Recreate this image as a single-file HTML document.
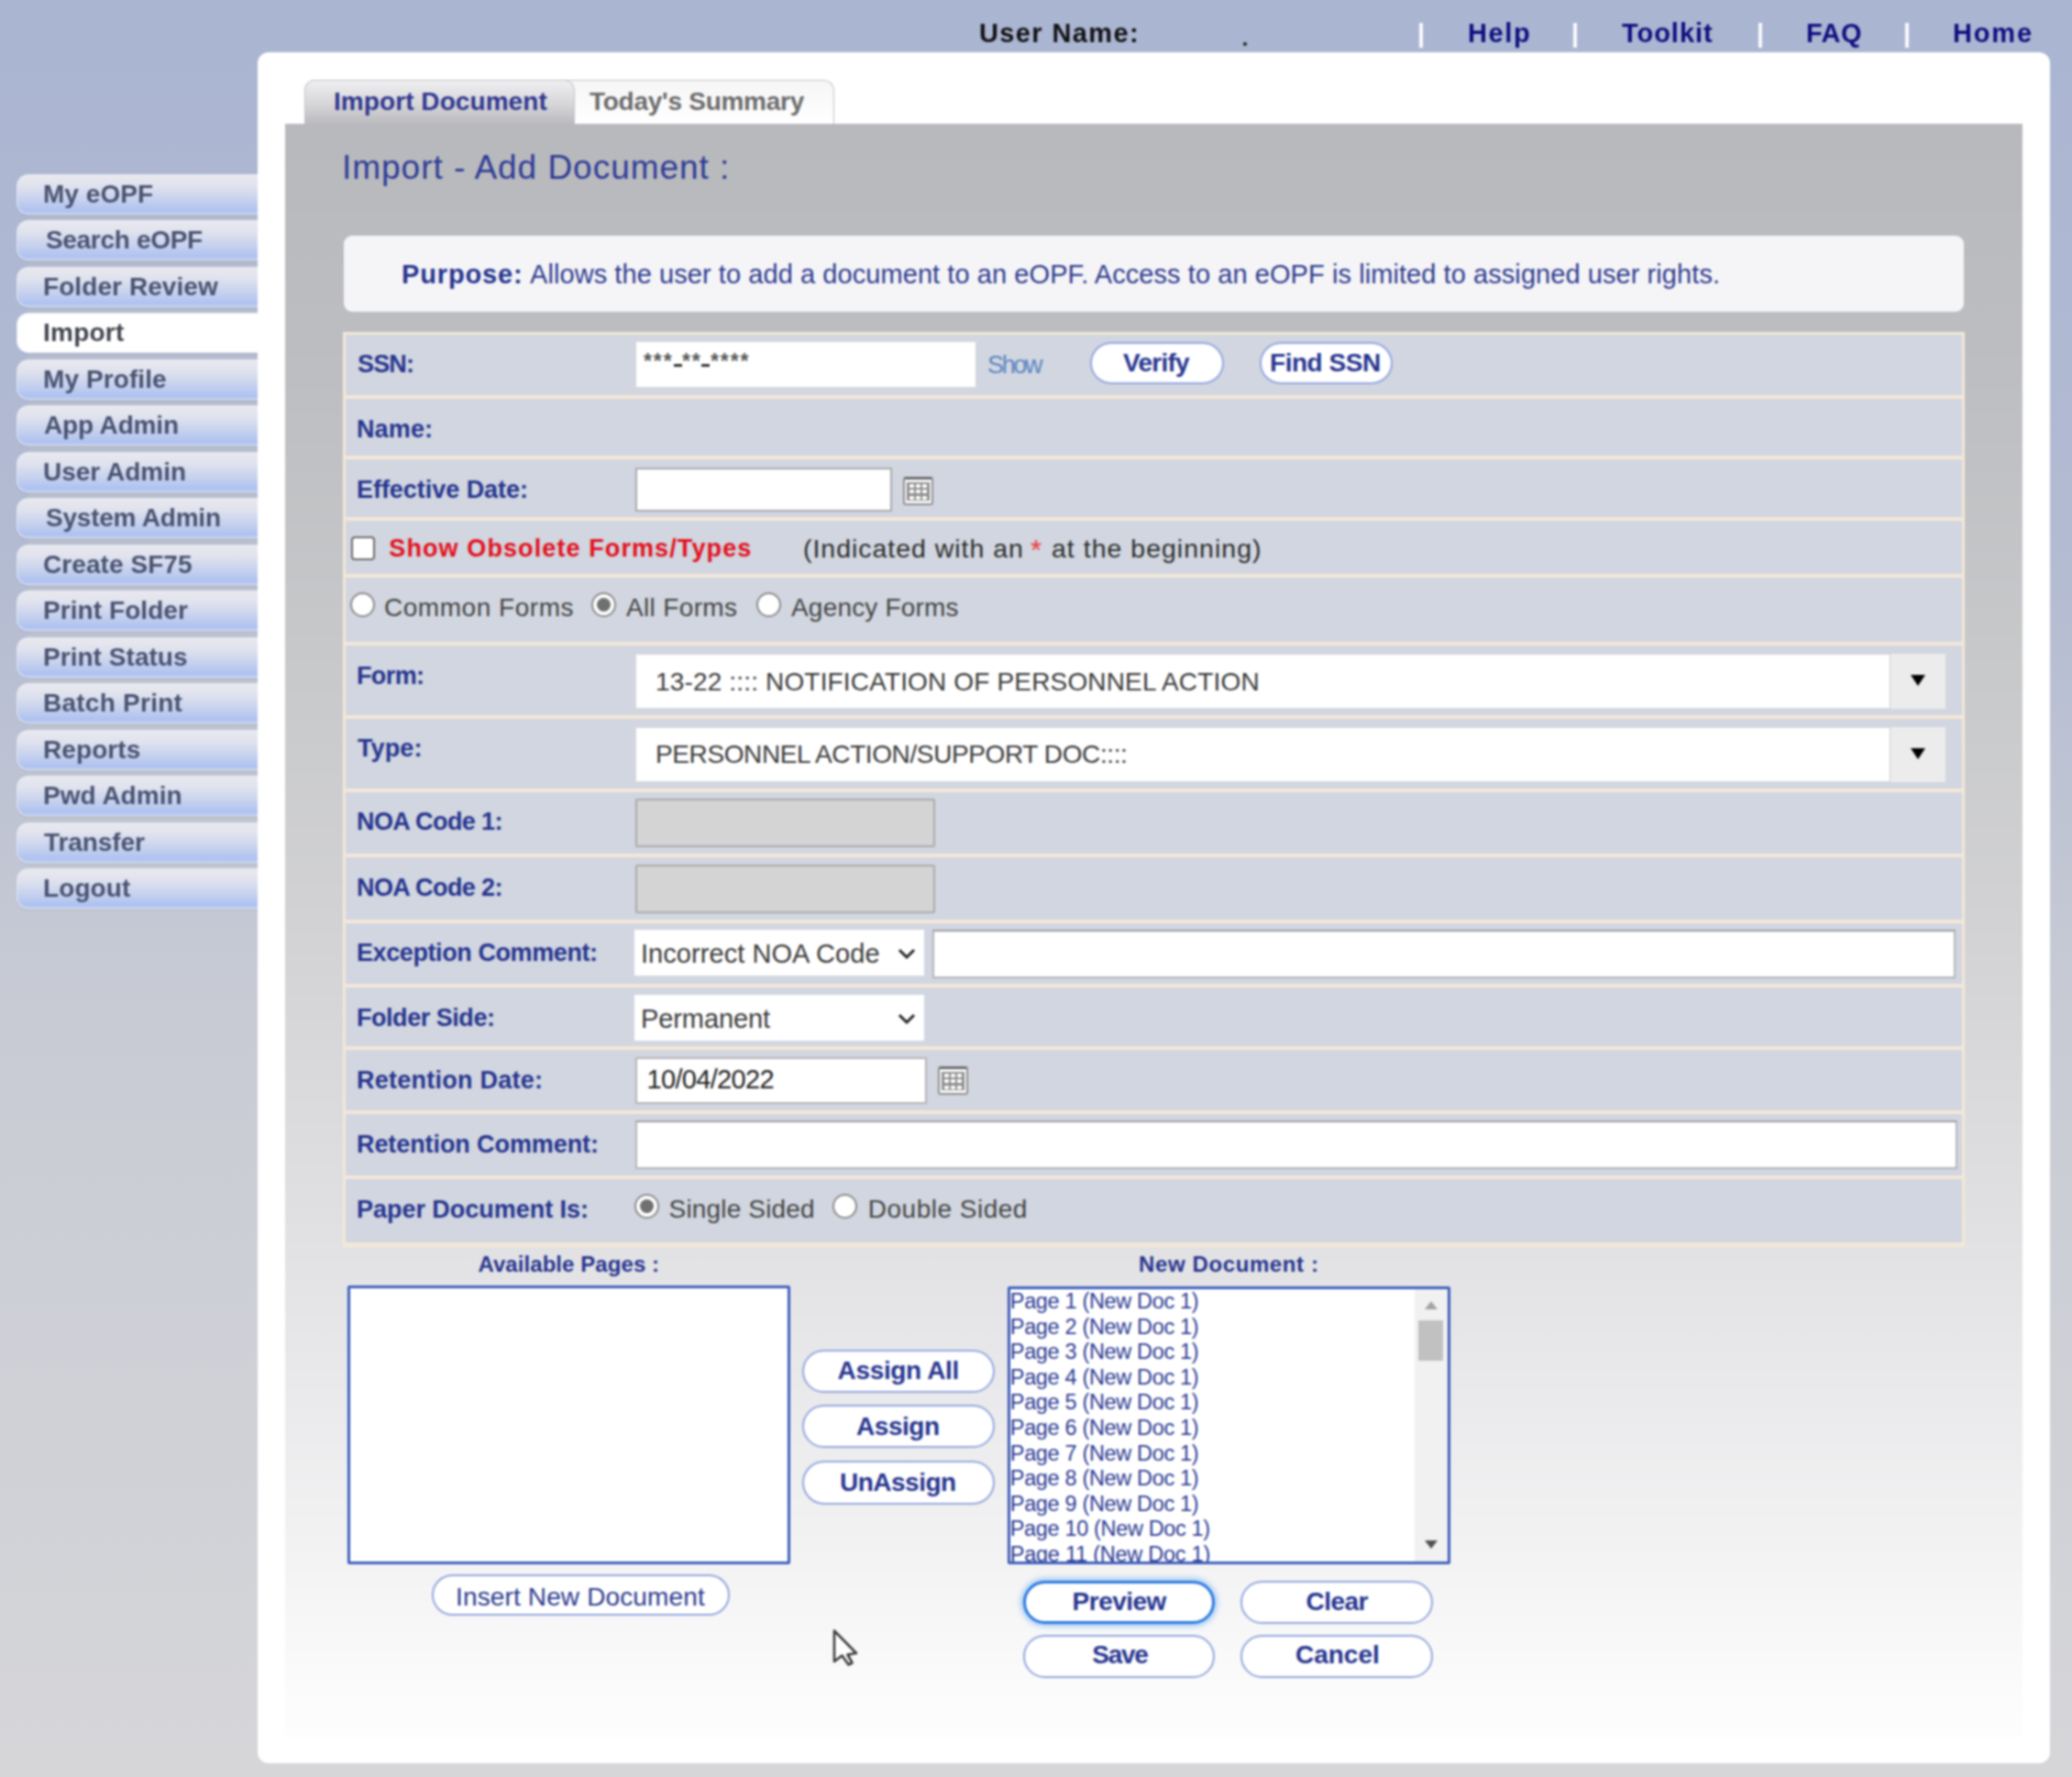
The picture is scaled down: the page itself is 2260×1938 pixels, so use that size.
<!DOCTYPE html><html><head><meta charset="utf-8"><style>
*{box-sizing:border-box;margin:0;padding:0}
html,body{width:2260px;height:1938px;overflow:hidden}
body{position:relative;font-family:"Liberation Sans",sans-serif;background:linear-gradient(180deg,#aab5d2 0px,#b3bbd2 600px,#c8cbd4 1100px,#d6d6d9 1938px)}
.a{position:absolute}
.t{position:absolute;white-space:pre}
.nav{position:absolute;left:18px;width:270px;height:44px;border-radius:13px 0 0 13px;border:1.5px solid #e4eaf6;border-right:none;
 background:linear-gradient(180deg,#e9e9ee 0%,#dfe2ee 30%,#c6d1ee 65%,#b0c3f0 90%,#b4c6f2 100%);
 box-shadow:0 1px 2px rgba(90,100,130,0.15)}
.nav.sel{background:#fff}
.row{position:absolute;left:377px;width:1763px;background:#d1d6e0}
.inp{position:absolute;background:#fff;border:1.5px solid #c4c6cc}
.dis{position:absolute;background:#d4d4d4;border:2px solid #a9a9ab;border-radius:2px}
.btn{position:absolute;background:#fff;border:2px solid #93a6de;border-radius:30px}
.radio{position:absolute;width:27px;height:27px;border-radius:50%;background:#fff;border:2px solid #8a8a8a}
.cal{position:absolute;width:33px;height:31px;border:1.5px solid #9a9a9a;border-radius:3px;background:#e9e9ea}
</style></head><body><div id="root" style="position:absolute;left:0;top:0;width:2260px;height:1938px;filter:blur(1px)">
<div class="a" style="left:31px;top:215px;width:250px;height:750px;background:linear-gradient(180deg,#b3bacd,#c2c6d2)"></div>
<div class="nav" style="top:189.6px"></div>
<div class="nav" style="top:240.1px"></div>
<div class="nav" style="top:290.6px"></div>
<div class="nav sel" style="top:341.1px"></div>
<div class="nav" style="top:391.6px"></div>
<div class="nav" style="top:442.1px"></div>
<div class="nav" style="top:492.6px"></div>
<div class="nav" style="top:543.1px"></div>
<div class="nav" style="top:593.6px"></div>
<div class="nav" style="top:644.1px"></div>
<div class="nav" style="top:694.6px"></div>
<div class="nav" style="top:745.1px"></div>
<div class="nav" style="top:795.6px"></div>
<div class="nav" style="top:846.1px"></div>
<div class="nav" style="top:896.6px"></div>
<div class="nav" style="top:947.1px"></div>
<div class="a" style="left:1548px;top:25px;width:4px;height:27px;background:#fbfbfd"></div>
<div class="a" style="left:1716px;top:25px;width:4px;height:27px;background:#fbfbfd"></div>
<div class="a" style="left:1918px;top:25px;width:4px;height:27px;background:#fbfbfd"></div>
<div class="a" style="left:2078px;top:25px;width:4px;height:27px;background:#fbfbfd"></div>
<div class="a" style="left:1356px;top:46px;width:4px;height:4px;background:#222;border-radius:2px"></div>
<div class="a" style="left:281px;top:57px;width:1955px;height:1866px;background:#fff;border-radius:12px"></div>
<div class="a" style="left:311px;top:135px;width:1895px;height:1759px;background:linear-gradient(180deg,#b8b9bc 0px,#bdbec1 265px,#c7c8ca 565px,#d2d2d4 865px,#dfdfe1 1165px,#e9e9eb 1365px,#f3f3f4 1565px,#fcfcfc 1720px,#fdfdfd 1759px)"></div>
<div class="a" style="left:332px;top:87px;width:578px;height:48px;border:1.5px solid #c2c2c6;border-bottom:none;border-radius:12px 12px 0 0;background:linear-gradient(180deg,#f6f6f7,#ffffff)"></div>
<div class="a" style="left:332px;top:87px;width:295px;height:48px;border:1.5px solid #c2c2c6;border-bottom:none;border-radius:12px 12px 0 0;background:linear-gradient(180deg,#f0f0f2 0%,#d6d6d9 55%,#bbbbbf 100%)"></div>
<div class="a" style="left:375px;top:257px;width:1767px;height:83px;background:#f5f5f7;border-radius:9px"></div>
<div class="a" style="left:374px;top:362px;width:1769px;height:998px;background:#f4e7d8"></div>
<div class="row" style="top:365.0px;height:66.0px"></div>
<div class="row" style="top:435.0px;height:62.0px"></div>
<div class="row" style="top:501.0px;height:63.0px"></div>
<div class="row" style="top:568.0px;height:58.0px"></div>
<div class="row" style="top:630.0px;height:70.0px"></div>
<div class="row" style="top:704.0px;height:76.0px"></div>
<div class="row" style="top:784.0px;height:75.5px"></div>
<div class="row" style="top:863.5px;height:67.0px"></div>
<div class="row" style="top:934.5px;height:68.0px"></div>
<div class="row" style="top:1006.5px;height:66.5px"></div>
<div class="row" style="top:1077.0px;height:63.5px"></div>
<div class="row" style="top:1144.5px;height:66.0px"></div>
<div class="row" style="top:1214.5px;height:67.0px"></div>
<div class="row" style="top:1285.5px;height:69.5px"></div>
<div class="inp" style="left:693px;top:372px;width:372px;height:51px;border-color:#d6d6da"></div>
<div class="t" style="left:702px;top:383px;font-size:23px;line-height:23px;color:#555;font-weight:700;letter-spacing:1.9px">***</div>
<div class="t" style="left:744px;top:383px;font-size:23px;line-height:23px;color:#555;font-weight:700;letter-spacing:1.9px">**</div>
<div class="t" style="left:775px;top:383px;font-size:23px;line-height:23px;color:#555;font-weight:700;letter-spacing:1.9px">****</div>
<div class="a" style="left:735px;top:397px;width:9px;height:3px;background:#333"></div>
<div class="a" style="left:765px;top:397px;width:9px;height:3px;background:#333"></div>
<div class="btn" style="left:1189px;top:373px;width:146px;height:46px"></div>
<div class="btn" style="left:1374px;top:373px;width:145px;height:46px"></div>
<div class="inp" style="left:693px;top:510px;width:280px;height:48px;border:2px solid #a9a9ad"></div>
<div class="a" style="left:985px;top:520px;width:33px;height:31px;border:2px solid #8e8e90;border-top:3px solid #6a6a6c;border-radius:3px;background:#fbfbfb"><div class="a" style="left:2px;top:3px;width:25px;height:20px;background:#8f8f91"></div><div class="a" style="left:4.5px;top:5.0px;width:5px;height:4px;background:#fff;border-radius:1px"></div><div class="a" style="left:12.0px;top:5.0px;width:5px;height:4px;background:#fff;border-radius:1px"></div><div class="a" style="left:19.0px;top:5.0px;width:5px;height:4px;background:#fff;border-radius:1px"></div><div class="a" style="left:4.5px;top:11.0px;width:5px;height:4px;background:#fff;border-radius:1px"></div><div class="a" style="left:12.0px;top:11.0px;width:5px;height:4px;background:#fff;border-radius:1px"></div><div class="a" style="left:19.0px;top:11.0px;width:5px;height:4px;background:#fff;border-radius:1px"></div><div class="a" style="left:4.5px;top:17.5px;width:5px;height:4px;background:#fff;border-radius:1px"></div><div class="a" style="left:12.0px;top:17.5px;width:5px;height:4px;background:#fff;border-radius:1px"></div><div class="a" style="left:19.0px;top:17.5px;width:5px;height:4px;background:#fff;border-radius:1px"></div></div>
<div class="a" style="left:383px;top:585px;width:26px;height:26px;border:2px solid #6a6a6a;border-radius:4px;background:#fff"></div>
<div class="radio" style="left:382px;top:646px"></div>
<div class="radio" style="left:645px;top:646px"><div class="a" style="left:4px;top:4px;width:15px;height:15px;border-radius:50%;background:#707070"></div></div>
<div class="radio" style="left:825px;top:646px"></div>
<div class="a" style="left:693px;top:712.5px;width:1430px;height:60px;background:#fff;border:1px solid #d8d8dc"></div>
<div class="a" style="left:2061px;top:712.5px;width:61px;height:60px;background:#ececed;border-left:1.5px solid #cfcfd2"></div>
<div class="a" style="left:2084px;top:736.0px;width:0;height:0;border-left:8px solid transparent;border-right:8px solid transparent;border-top:12px solid #000"></div>
<div class="a" style="left:693px;top:792.5px;width:1430px;height:60px;background:#fff;border:1px solid #d8d8dc"></div>
<div class="a" style="left:2061px;top:792.5px;width:61px;height:60px;background:#ececed;border-left:1.5px solid #cfcfd2"></div>
<div class="a" style="left:2084px;top:816.0px;width:0;height:0;border-left:8px solid transparent;border-right:8px solid transparent;border-top:12px solid #000"></div>
<div class="dis" style="left:693px;top:871px;width:327px;height:53px"></div>
<div class="dis" style="left:693px;top:943px;width:327px;height:53px"></div>
<div class="a" style="left:692px;top:1014px;width:316px;height:50px;background:#fff"></div>
<svg class="a" style="left:979px;top:1033px" width="20" height="14" viewBox="0 0 20 14"><path d="M2 3 L10 11 L18 3" fill="none" stroke="#222" stroke-width="3"/></svg>
<div class="inp" style="left:1017px;top:1014px;width:1116px;height:53px;border:2px solid #b4b4b8;border-top-color:#9c9ca0"></div>
<div class="a" style="left:692px;top:1085px;width:316px;height:50px;background:#fff"></div>
<svg class="a" style="left:979px;top:1104px" width="20" height="14" viewBox="0 0 20 14"><path d="M2 3 L10 11 L18 3" fill="none" stroke="#222" stroke-width="3"/></svg>
<div class="inp" style="left:693px;top:1153px;width:318px;height:51px;border:2px solid #b5b5b9"></div>
<div class="a" style="left:1023px;top:1163px;width:33px;height:31px;border:2px solid #8e8e90;border-top:3px solid #6a6a6c;border-radius:3px;background:#fbfbfb"><div class="a" style="left:2px;top:3px;width:25px;height:20px;background:#8f8f91"></div><div class="a" style="left:4.5px;top:5.0px;width:5px;height:4px;background:#fff;border-radius:1px"></div><div class="a" style="left:12.0px;top:5.0px;width:5px;height:4px;background:#fff;border-radius:1px"></div><div class="a" style="left:19.0px;top:5.0px;width:5px;height:4px;background:#fff;border-radius:1px"></div><div class="a" style="left:4.5px;top:11.0px;width:5px;height:4px;background:#fff;border-radius:1px"></div><div class="a" style="left:12.0px;top:11.0px;width:5px;height:4px;background:#fff;border-radius:1px"></div><div class="a" style="left:19.0px;top:11.0px;width:5px;height:4px;background:#fff;border-radius:1px"></div><div class="a" style="left:4.5px;top:17.5px;width:5px;height:4px;background:#fff;border-radius:1px"></div><div class="a" style="left:12.0px;top:17.5px;width:5px;height:4px;background:#fff;border-radius:1px"></div><div class="a" style="left:19.0px;top:17.5px;width:5px;height:4px;background:#fff;border-radius:1px"></div></div>
<div class="inp" style="left:693px;top:1222px;width:1442px;height:53px;border:2px solid #b4b4b8;border-top-color:#9c9ca0"></div>
<div class="radio" style="left:692px;top:1302px"><div class="a" style="left:4px;top:4px;width:15px;height:15px;border-radius:50%;background:#707070"></div></div>
<div class="radio" style="left:908px;top:1302px"></div>
<div class="a" style="left:379px;top:1402px;width:483px;height:304px;background:#fff;border:3px solid #3a5cbc;border-radius:2px"></div>
<div class="a" style="left:1099px;top:1403px;width:483px;height:303px;background:#fff;border:3px solid #3a5cbc;border-radius:2px;overflow:hidden"></div>
<div class="a" style="left:1543px;top:1406px;width:36px;height:297px;background:#f1f1f1"></div>
<div class="a" style="left:1547px;top:1440px;width:27px;height:44px;background:#c1c1c1"></div>
<div class="a" style="left:1554px;top:1419px;width:0;height:0;border-left:7px solid transparent;border-right:7px solid transparent;border-bottom:9px solid #a3a3a3"></div>
<div class="a" style="left:1554px;top:1680px;width:0;height:0;border-left:7px solid transparent;border-right:7px solid transparent;border-top:9px solid #505050"></div>
<div class="btn" style="left:875px;top:1472px;width:210px;height:47px"></div>
<div class="btn" style="left:875px;top:1532px;width:210px;height:47px"></div>
<div class="btn" style="left:875px;top:1593px;width:210px;height:48px"></div>
<div class="btn" style="left:471px;top:1717px;width:325px;height:45px"></div>
<div class="btn" style="left:1116px;top:1724px;width:209px;height:47px;border:3px solid #2f7ae0;box-shadow:0 0 6px 2px rgba(60,150,240,0.55)"></div>
<div class="btn" style="left:1353px;top:1724px;width:210px;height:47px"></div>
<div class="btn" style="left:1116px;top:1783px;width:209px;height:47px"></div>
<div class="btn" style="left:1353px;top:1783px;width:210px;height:47px"></div>
<div class="a" style="left:1102px;top:1406px;width:440px;height:297px;overflow:hidden"><div class="a" style="left:-1102px;top:-1406px;width:2260px;height:1938px">
<div class="t" style="left:1101.8px;top:1408.0px;font-size:23.5px;line-height:23.5px;font-weight:400;color:#2c3a92;letter-spacing:-0.34px">Page 1 (New Doc 1)</div>
<div class="t" style="left:1101.8px;top:1435.6px;font-size:23.5px;line-height:23.5px;font-weight:400;color:#2c3a92;letter-spacing:-0.34px">Page 2 (New Doc 1)</div>
<div class="t" style="left:1101.8px;top:1463.2px;font-size:23.5px;line-height:23.5px;font-weight:400;color:#2c3a92;letter-spacing:-0.34px">Page 3 (New Doc 1)</div>
<div class="t" style="left:1101.8px;top:1490.8px;font-size:23.5px;line-height:23.5px;font-weight:400;color:#2c3a92;letter-spacing:-0.34px">Page 4 (New Doc 1)</div>
<div class="t" style="left:1101.8px;top:1518.4px;font-size:23.5px;line-height:23.5px;font-weight:400;color:#2c3a92;letter-spacing:-0.34px">Page 5 (New Doc 1)</div>
<div class="t" style="left:1101.8px;top:1546.0px;font-size:23.5px;line-height:23.5px;font-weight:400;color:#2c3a92;letter-spacing:-0.34px">Page 6 (New Doc 1)</div>
<div class="t" style="left:1101.8px;top:1573.6px;font-size:23.5px;line-height:23.5px;font-weight:400;color:#2c3a92;letter-spacing:-0.34px">Page 7 (New Doc 1)</div>
<div class="t" style="left:1101.8px;top:1601.2px;font-size:23.5px;line-height:23.5px;font-weight:400;color:#2c3a92;letter-spacing:-0.34px">Page 8 (New Doc 1)</div>
<div class="t" style="left:1101.8px;top:1628.8px;font-size:23.5px;line-height:23.5px;font-weight:400;color:#2c3a92;letter-spacing:-0.34px">Page 9 (New Doc 1)</div>
<div class="t" style="left:1101.8px;top:1656.4px;font-size:23.5px;line-height:23.5px;font-weight:400;color:#2c3a92;letter-spacing:-0.35px">Page 10 (New Doc 1)</div>
<div class="t" style="left:1101.8px;top:1684.0px;font-size:23.5px;line-height:23.5px;font-weight:400;color:#2c3a92;letter-spacing:-0.25px">Page 11 (New Doc 1)</div>
</div></div>
<div class="t" style="left:1068.0px;top:21.9px;font-size:29.0px;line-height:29.0px;font-weight:700;color:#111;letter-spacing:1.39px">User Name:</div>
<div class="t" style="left:1601.0px;top:22.4px;font-size:29.0px;line-height:29.0px;font-weight:700;color:#0d0d7d;letter-spacing:1.62px">Help</div>
<div class="t" style="left:1769.0px;top:22.4px;font-size:29.0px;line-height:29.0px;font-weight:700;color:#0d0d7d;letter-spacing:0.96px">Toolkit</div>
<div class="t" style="left:1970.0px;top:22.4px;font-size:29.0px;line-height:29.0px;font-weight:700;color:#0d0d7d;letter-spacing:0.47px">FAQ</div>
<div class="t" style="left:2130.0px;top:22.4px;font-size:29.0px;line-height:29.0px;font-weight:700;color:#0d0d7d;letter-spacing:1.85px">Home</div>
<div class="t" style="left:47.0px;top:197.7px;font-size:28.0px;line-height:28.0px;font-weight:700;color:#485270;letter-spacing:0.05px">My eOPF</div>
<div class="t" style="left:50.0px;top:248.2px;font-size:28.0px;line-height:28.0px;font-weight:700;color:#485270;letter-spacing:-0.32px">Search eOPF</div>
<div class="t" style="left:47.0px;top:298.7px;font-size:28.0px;line-height:28.0px;font-weight:700;color:#485270;letter-spacing:0.08px">Folder Review</div>
<div class="t" style="left:47.0px;top:349.2px;font-size:28.0px;line-height:28.0px;font-weight:700;color:#42454f;letter-spacing:0.24px">Import</div>
<div class="t" style="left:47.0px;top:399.7px;font-size:28.0px;line-height:28.0px;font-weight:700;color:#485270;letter-spacing:0.09px">My Profile</div>
<div class="t" style="left:48.0px;top:450.2px;font-size:28.0px;line-height:28.0px;font-weight:700;color:#485270;letter-spacing:-0.15px">App Admin</div>
<div class="t" style="left:47.0px;top:500.7px;font-size:28.0px;line-height:28.0px;font-weight:700;color:#485270;letter-spacing:-0.00px">User Admin</div>
<div class="t" style="left:50.0px;top:551.2px;font-size:28.0px;line-height:28.0px;font-weight:700;color:#485270;letter-spacing:-0.22px">System Admin</div>
<div class="t" style="left:47.0px;top:601.7px;font-size:28.0px;line-height:28.0px;font-weight:700;color:#485270;letter-spacing:0.07px">Create SF75</div>
<div class="t" style="left:47.0px;top:652.2px;font-size:28.0px;line-height:28.0px;font-weight:700;color:#485270;letter-spacing:0.07px">Print Folder</div>
<div class="t" style="left:47.0px;top:702.7px;font-size:28.0px;line-height:28.0px;font-weight:700;color:#485270;letter-spacing:0.04px">Print Status</div>
<div class="t" style="left:47.0px;top:753.2px;font-size:28.0px;line-height:28.0px;font-weight:700;color:#485270;letter-spacing:0.25px">Batch Print</div>
<div class="t" style="left:47.0px;top:803.7px;font-size:28.0px;line-height:28.0px;font-weight:700;color:#485270;letter-spacing:0.08px">Reports</div>
<div class="t" style="left:47.0px;top:854.2px;font-size:28.0px;line-height:28.0px;font-weight:700;color:#485270;letter-spacing:0.02px">Pwd Admin</div>
<div class="t" style="left:48.0px;top:904.7px;font-size:28.0px;line-height:28.0px;font-weight:700;color:#485270;letter-spacing:-0.09px">Transfer</div>
<div class="t" style="left:47.0px;top:955.2px;font-size:28.0px;line-height:28.0px;font-weight:700;color:#485270;letter-spacing:0.10px">Logout</div>
<div class="t" style="left:364.0px;top:96.5px;font-size:28.0px;line-height:28.0px;font-weight:700;color:#30368f;letter-spacing:0.07px">Import Document</div>
<div class="t" style="left:643.0px;top:96.5px;font-size:28.0px;line-height:28.0px;font-weight:700;color:#6b6b6b;letter-spacing:-0.27px">Today's Summary</div>
<div class="t" style="left:373.0px;top:163.7px;font-size:37.0px;line-height:37.0px;font-weight:400;color:#2e3a96;letter-spacing:0.97px">Import - Add Document :</div>
<div class="t" style="left:438.0px;top:284.9px;font-size:29.0px;line-height:29.0px;font-weight:700;color:#26348e;letter-spacing:0.85px">Purpose:</div>
<div class="t" style="left:578.0px;top:284.9px;font-size:29.0px;line-height:29.0px;font-weight:400;color:#2e3a8e;letter-spacing:0.07px">Allows the user to add a document to an eOPF. Access to an eOPF is limited to assigned user rights.</div>
<div class="t" style="left:390.0px;top:383.7px;font-size:27.0px;line-height:27.0px;font-weight:700;color:#26348e;letter-spacing:-0.84px">SSN:</div>
<div class="t" style="left:389.0px;top:454.6px;font-size:27.0px;line-height:27.0px;font-weight:700;color:#26348e;letter-spacing:0.12px">Name:</div>
<div class="t" style="left:389.0px;top:521.3px;font-size:27.0px;line-height:27.0px;font-weight:700;color:#26348e;letter-spacing:-0.04px">Effective Date:</div>
<div class="t" style="left:389.0px;top:723.5px;font-size:27.0px;line-height:27.0px;font-weight:700;color:#26348e;letter-spacing:-0.62px">Form:</div>
<div class="t" style="left:390.0px;top:803.1px;font-size:27.0px;line-height:27.0px;font-weight:700;color:#26348e;letter-spacing:0.12px">Type:</div>
<div class="t" style="left:389.0px;top:882.8px;font-size:27.0px;line-height:27.0px;font-weight:700;color:#26348e;letter-spacing:-0.60px">NOA Code 1:</div>
<div class="t" style="left:389.0px;top:954.7px;font-size:27.0px;line-height:27.0px;font-weight:700;color:#26348e;letter-spacing:-0.60px">NOA Code 2:</div>
<div class="t" style="left:389.0px;top:1025.6px;font-size:27.0px;line-height:27.0px;font-weight:700;color:#26348e;letter-spacing:-0.41px">Exception Comment:</div>
<div class="t" style="left:389.0px;top:1097.1px;font-size:27.0px;line-height:27.0px;font-weight:700;color:#26348e;letter-spacing:-0.46px">Folder Side:</div>
<div class="t" style="left:389.0px;top:1165.1px;font-size:27.0px;line-height:27.0px;font-weight:700;color:#26348e;letter-spacing:0.25px">Retention Date:</div>
<div class="t" style="left:389.0px;top:1234.5px;font-size:27.0px;line-height:27.0px;font-weight:700;color:#26348e;letter-spacing:-0.09px">Retention Comment:</div>
<div class="t" style="left:389.0px;top:1305.9px;font-size:27.0px;line-height:27.0px;font-weight:700;color:#26348e;letter-spacing:-0.03px">Paper Document Is:</div>
<div class="t" style="left:424.3px;top:585.1px;font-size:27.0px;line-height:27.0px;font-weight:700;color:#e3101c;letter-spacing:1.10px">Show Obsolete Forms/Types</div>
<div class="t" style="left:876.0px;top:583.9px;font-size:28.5px;line-height:28.5px;font-weight:400;color:#2c2c2c;letter-spacing:0.97px">(Indicated with an</div>
<div class="t" style="left:1124.0px;top:584.8px;font-size:31.0px;line-height:31.0px;font-weight:400;color:#f03a3a;letter-spacing:0.00px">*</div>
<div class="t" style="left:1147.0px;top:583.9px;font-size:28.5px;line-height:28.5px;font-weight:400;color:#2c2c2c;letter-spacing:1.01px">at the beginning)</div>
<div class="t" style="left:419.0px;top:648.8px;font-size:28.0px;line-height:28.0px;font-weight:400;color:#444;letter-spacing:0.53px">Common Forms</div>
<div class="t" style="left:683.0px;top:648.8px;font-size:28.0px;line-height:28.0px;font-weight:400;color:#444;letter-spacing:0.35px">All Forms</div>
<div class="t" style="left:863.0px;top:648.8px;font-size:28.0px;line-height:28.0px;font-weight:400;color:#444;letter-spacing:0.19px">Agency Forms</div>
<div class="t" style="left:1077.0px;top:385.4px;font-size:27.0px;line-height:27.0px;font-weight:400;color:#5b86c0;letter-spacing:-2.35px">Show</div>
<div class="t" style="left:1225.0px;top:382.1px;font-size:28.0px;line-height:28.0px;font-weight:700;color:#26348e;letter-spacing:-0.74px">Verify</div>
<div class="t" style="left:1385.0px;top:382.1px;font-size:28.0px;line-height:28.0px;font-weight:700;color:#26348e;letter-spacing:-0.46px">Find SSN</div>
<div class="t" style="left:715.0px;top:729.5px;font-size:28.0px;line-height:28.0px;font-weight:400;color:#3a3a3a;letter-spacing:0.16px">13-22 :::: NOTIFICATION OF PERSONNEL ACTION</div>
<div class="t" style="left:715.0px;top:808.7px;font-size:28.0px;line-height:28.0px;font-weight:400;color:#3a3a3a;letter-spacing:-0.39px">PERSONNEL ACTION/SUPPORT DOC::::</div>
<div class="t" style="left:699.0px;top:1026.4px;font-size:29.0px;line-height:29.0px;font-weight:400;color:#3a3a3a;letter-spacing:0.06px">Incorrect NOA Code</div>
<div class="t" style="left:699.0px;top:1097.2px;font-size:29.0px;line-height:29.0px;font-weight:400;color:#3a3a3a;letter-spacing:-0.10px">Permanent</div>
<div class="t" style="left:705.5px;top:1163.4px;font-size:29.0px;line-height:29.0px;font-weight:400;color:#222;letter-spacing:-0.67px">10/04/2022</div>
<div class="t" style="left:729.6px;top:1305.1px;font-size:28.0px;line-height:28.0px;font-weight:400;color:#444;letter-spacing:0.16px">Single Sided</div>
<div class="t" style="left:946.8px;top:1305.1px;font-size:28.0px;line-height:28.0px;font-weight:400;color:#444;letter-spacing:0.50px">Double Sided</div>
<div class="t" style="left:521.4px;top:1366.5px;font-size:24.0px;line-height:24.0px;font-weight:700;color:#26348e;letter-spacing:0.07px">Available Pages :</div>
<div class="t" style="left:1242.0px;top:1367.4px;font-size:24.0px;line-height:24.0px;font-weight:700;color:#26348e;letter-spacing:0.61px">New Document :</div>
<div class="t" style="left:913.6px;top:1481.3px;font-size:28.0px;line-height:28.0px;font-weight:700;color:#26348e;letter-spacing:-0.35px">Assign All</div>
<div class="t" style="left:934.0px;top:1542.0px;font-size:28.0px;line-height:28.0px;font-weight:700;color:#26348e;letter-spacing:-0.45px">Assign</div>
<div class="t" style="left:916.0px;top:1602.7px;font-size:28.0px;line-height:28.0px;font-weight:700;color:#26348e;letter-spacing:-0.51px">UnAssign</div>
<div class="t" style="left:497.0px;top:1727.7px;font-size:28.0px;line-height:28.0px;font-weight:400;color:#2b3a8c;letter-spacing:0.14px">Insert New Document</div>
<div class="t" style="left:1169.6px;top:1732.9px;font-size:28.0px;line-height:28.0px;font-weight:700;color:#26348e;letter-spacing:-0.51px">Preview</div>
<div class="t" style="left:1424.5px;top:1732.9px;font-size:28.0px;line-height:28.0px;font-weight:700;color:#26348e;letter-spacing:-0.54px">Clear</div>
<div class="t" style="left:1191.3px;top:1791.1px;font-size:28.0px;line-height:28.0px;font-weight:700;color:#26348e;letter-spacing:-1.27px">Save</div>
<div class="t" style="left:1413.0px;top:1791.1px;font-size:28.0px;line-height:28.0px;font-weight:700;color:#26348e;letter-spacing:-0.01px">Cancel</div>
<svg class="a" style="left:906px;top:1775px" width="34" height="46" viewBox="0 0 34 46"><path d="M4 3.5 L4 37 L12.5 30.5 L19.5 40.5 L23.5 38.5 L18.5 29.5 L28 28 Z" fill="#fff" stroke="#3a3a3a" stroke-width="2.6" stroke-linejoin="round"/></svg>
</div></body></html>
